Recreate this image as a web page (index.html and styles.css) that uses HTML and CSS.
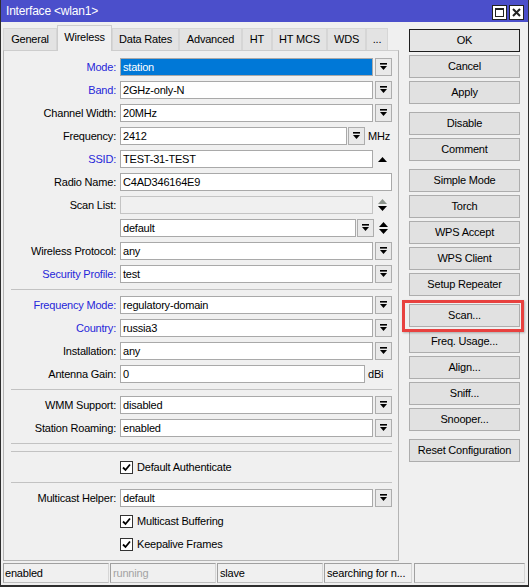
FILE: index.html
```html
<!DOCTYPE html>
<html>
<head>
<meta charset="utf-8">
<title>Interface &lt;wlan1&gt;</title>
<link rel="stylesheet" href="styles.css">
</head>
<body>
<div class="window">
  <div class="titlebar">
    <span class="title">Interface &lt;wlan1&gt;</span>
    <div class="tb-btns">
      <span class="tb-btn"><svg width="9" height="9" viewBox="0 0 9 9"><rect x="0.5" y="0.5" width="8" height="8" fill="none" stroke="#222" stroke-width="1"/><rect x="0" y="0" width="9" height="2" fill="#222"/></svg></span>
      <span class="tb-btn"><svg width="9" height="9" viewBox="0 0 9 9"><path d="M1 1L8 8M8 1L1 8" stroke="#222" stroke-width="2"/></svg></span>
    </div>
  </div>

  <div class="main">
    <div class="left">
      <div class="tabs">
        <div class="tab t1">General</div>
        <div class="tab t2 active">Wireless</div>
        <div class="tab t3">Data Rates</div>
        <div class="tab t4">Advanced</div>
        <div class="tab t5">HT</div>
        <div class="tab t6">HT MCS</div>
        <div class="tab t7">WDS</div>
        <div class="tab t8">...</div>
      </div>
      <div class="panel">
        <div class="row"><span class="lbl blue">Mode:</span><div class="field w-sel selected">station</div><span class="dd"><svg width="9" height="8" viewBox="0 0 9 8"><rect x="1" y="0" width="7" height="1.6"/><path d="M1 3h7l-3.5 4z"/></svg></span></div>
        <div class="row"><span class="lbl blue">Band:</span><div class="field w-sel">2GHz-only-N</div><span class="dd"><svg width="9" height="8" viewBox="0 0 9 8"><rect x="1" y="0" width="7" height="1.6"/><path d="M1 3h7l-3.5 4z"/></svg></span></div>
        <div class="row"><span class="lbl">Channel Width:</span><div class="field w-sel">20MHz</div><span class="dd"><svg width="9" height="8" viewBox="0 0 9 8"><rect x="1" y="0" width="7" height="1.6"/><path d="M1 3h7l-3.5 4z"/></svg></span></div>
        <div class="row"><span class="lbl">Frequency:</span><div class="field w-freq">2412</div><span class="dd tight"><svg width="9" height="8" viewBox="0 0 9 8"><rect x="1" y="0" width="7" height="1.6"/><path d="M1 3h7l-3.5 4z"/></svg></span><span class="unit">MHz</span></div>
        <div class="row"><span class="lbl blue">SSID:</span><div class="field w-sel">TEST-31-TEST</div><span class="arrows"><svg width="9" height="5" viewBox="0 0 9 5"><path d="M0 5h9L4.5 0z"/></svg></span></div>
        <div class="row"><span class="lbl">Radio Name:</span><div class="field w-full">C4AD346164E9</div></div>
        <div class="row"><span class="lbl">Scan List:</span><div class="field w-sel disabled"></div><span class="arrows"><svg width="9" height="12" viewBox="0 0 9 12"><path d="M0 5h9L4.5 0z" fill="#8c948c"/><path d="M0 7h9L4.5 12z"/></svg></span></div>
        <div class="row"><span class="lbl"></span><div class="field w-def">default</div><span class="dd tight"><svg width="9" height="8" viewBox="0 0 9 8"><rect x="1" y="0" width="7" height="1.6"/><path d="M1 3h7l-3.5 4z"/></svg></span><span class="arrows narrow"><svg width="9" height="12" viewBox="0 0 9 12"><path d="M0 5h9L4.5 0z"/><path d="M0 7h9L4.5 12z"/></svg></span></div>
        <div class="row"><span class="lbl">Wireless Protocol:</span><div class="field w-sel">any</div><span class="dd"><svg width="9" height="8" viewBox="0 0 9 8"><rect x="1" y="0" width="7" height="1.6"/><path d="M1 3h7l-3.5 4z"/></svg></span></div>
        <div class="row"><span class="lbl blue">Security Profile:</span><div class="field w-sel">test</div><span class="dd"><svg width="9" height="8" viewBox="0 0 9 8"><rect x="1" y="0" width="7" height="1.6"/><path d="M1 3h7l-3.5 4z"/></svg></span></div>

        <div class="sep"></div>

        <div class="row"><span class="lbl blue">Frequency Mode:</span><div class="field w-sel">regulatory-domain</div><span class="dd"><svg width="9" height="8" viewBox="0 0 9 8"><rect x="1" y="0" width="7" height="1.6"/><path d="M1 3h7l-3.5 4z"/></svg></span></div>
        <div class="row"><span class="lbl blue">Country:</span><div class="field w-sel">russia3</div><span class="dd"><svg width="9" height="8" viewBox="0 0 9 8"><rect x="1" y="0" width="7" height="1.6"/><path d="M1 3h7l-3.5 4z"/></svg></span></div>
        <div class="row"><span class="lbl">Installation:</span><div class="field w-sel">any</div><span class="dd"><svg width="9" height="8" viewBox="0 0 9 8"><rect x="1" y="0" width="7" height="1.6"/><path d="M1 3h7l-3.5 4z"/></svg></span></div>
        <div class="row"><span class="lbl">Antenna Gain:</span><div class="field w-gain">0</div><span class="unit">dBi</span></div>

        <div class="sep"></div>

        <div class="row"><span class="lbl">WMM Support:</span><div class="field w-sel">disabled</div><span class="dd"><svg width="9" height="8" viewBox="0 0 9 8"><rect x="1" y="0" width="7" height="1.6"/><path d="M1 3h7l-3.5 4z"/></svg></span></div>
        <div class="row"><span class="lbl">Station Roaming:</span><div class="field w-sel">enabled</div><span class="dd"><svg width="9" height="8" viewBox="0 0 9 8"><rect x="1" y="0" width="7" height="1.6"/><path d="M1 3h7l-3.5 4z"/></svg></span></div>

        <div class="sep"></div>
        <div class="sep"></div>

        <div class="row"><span class="lbl"></span><span class="cb"><svg width="9" height="9" viewBox="0 0 9 9"><path d="M1 4.5L3.5 7L8 1.5" fill="none" stroke="#000" stroke-width="1.8"/></svg></span><span>Default Authenticate</span></div>

        <div class="sep"></div>

        <div class="row"><span class="lbl">Multicast Helper:</span><div class="field w-sel">default</div><span class="dd"><svg width="9" height="8" viewBox="0 0 9 8"><rect x="1" y="0" width="7" height="1.6"/><path d="M1 3h7l-3.5 4z"/></svg></span></div>
        <div class="row"><span class="lbl"></span><span class="cb"><svg width="9" height="9" viewBox="0 0 9 9"><path d="M1 4.5L3.5 7L8 1.5" fill="none" stroke="#000" stroke-width="1.8"/></svg></span><span>Multicast Buffering</span></div>
        <div class="row"><span class="lbl"></span><span class="cb"><svg width="9" height="9" viewBox="0 0 9 9"><path d="M1 4.5L3.5 7L8 1.5" fill="none" stroke="#000" stroke-width="1.8"/></svg></span><span>Keepalive Frames</span></div>
      </div>
    </div>

    <div class="side">
      <div class="btn default">OK</div>
      <div class="btn">Cancel</div>
      <div class="btn">Apply</div>
      <div class="btn gs">Disable</div>
      <div class="btn">Comment</div>
      <div class="btn gs">Simple Mode</div>
      <div class="btn">Torch</div>
      <div class="btn">WPS Accept</div>
      <div class="btn">WPS Client</div>
      <div class="btn">Setup Repeater</div>
      <div class="btn gs scan">Scan...<span class="highlight"></span></div>
      <div class="btn">Freq. Usage...</div>
      <div class="btn">Align...</div>
      <div class="btn">Sniff...</div>
      <div class="btn">Snooper...</div>
      <div class="btn gs">Reset Configuration</div>
    </div>
  </div>

  <div class="status">
    <div class="cell c1">enabled</div>
    <div class="cell c2 dim">running</div>
    <div class="cell c3">slave</div>
    <div class="cell c4">searching for n...</div>
    <div class="cell c5"></div>
  </div>
</div>
</body>
</html>
```

FILE: styles.css
```css
* { box-sizing: border-box; }
html, body { margin: 0; padding: 0; }
body {
  width: 529px;
  height: 587px;
  overflow: hidden;
  background: #f0f0f0;
  font-family: "Liberation Sans", Arial, sans-serif;
  font-size: 11px;
  letter-spacing: -0.2px;
  color: #000;
}

.window {
  width: 529px;
  height: 587px;
  display: flex;
  flex-direction: column;
  background: #f0f0f0;
  border: 1px solid #2e2e2e;
  border-top: 0;
  border-bottom-width: 2px;
}

/* title bar */
.titlebar {
  flex: none;
  height: 22px;
  background: #4b4fcb;
  color: #fff;
  display: flex;
  align-items: flex-start;
  justify-content: space-between;
  padding: 0 4px 0 5px;
}
.title {
  font-size: 12px;
  line-height: 14px;
  padding-top: 4px;
}
.tb-btns { display: flex; gap: 2px; margin-top: 5px; }
.tb-btn {
  width: 15px;
  height: 15px;
  background: #fff;
  border: 1px solid #222;
  display: flex;
  align-items: center;
  justify-content: center;
}

/* main */
.main { flex: 1; display: flex; min-height: 0; }
.left {
  width: 396px;
  margin-left: 2px;
  padding-top: 3px;
  display: flex;
  flex-direction: column;
}

.tabs { height: 25px; display: flex; align-items: flex-end; flex: none; }
.tab {
  height: 22px;
  padding-top: 3px;
  line-height: 15px;
  text-align: center;
  white-space: nowrap;
  background: #e3e3e3;
  border: 1px solid #d6d6d6;
  border-bottom: 0;
}
.tab.active {
  height: 26px;
  margin-bottom: -1px;
  padding-top: 4px;
  background: #f0f0f0;
  border-color: #cdcdcd;
  position: relative;
  z-index: 1;
}
.t1 { width: 54px; }
.t2 { width: 55px; }
.t3 { width: 67px; }
.t4 { width: 63px; }
.t5 { width: 30px; }
.t6 { width: 55px; }
.t7 { width: 39px; }
.t8 { width: 22px; }

.panel {
  height: 511px;
  flex: none;
  border: 1px solid #b4b4b4;
  border-top-color: #cdcdcd;
  padding-top: 7px;
  display: flex;
  flex-direction: column;
}

.row { display: flex; align-items: center; height: 18px; flex: none; }
.row + .row { margin-top: 5px; }
.lbl {
  width: 112px;
  margin-right: 4px;
  text-align: right;
  white-space: nowrap;
  flex: none;
}
.blue { color: #2626d9; }

.field {
  height: 18px;
  border: 1px solid #a9a9a9;
  background: #fff;
  padding: 0 2px;
  line-height: 16px;
  white-space: nowrap;
  overflow: hidden;
  flex: none;
}
.field.selected { background: #0078d7; color: #fff; }
.field.disabled { background: #f0f0f0; border-color: #c4c4c4; }
.w-sel { width: 253px; }
.w-full { width: 272px; }
.w-freq { width: 227px; }
.w-gain { width: 245px; }
.w-def { width: 236px; }

.dd {
  flex: none;
  width: 17px;
  height: 18px;
  margin-left: 2px;
  border: 1px solid #adadad;
  background: #e9e9e9;
  display: flex;
  align-items: center;
  justify-content: center;
}
.dd.tight { margin-left: 1px; }
.unit { margin-left: 3px; }
.arrows {
  flex: none;
  width: 19px;
  height: 18px;
  display: flex;
  align-items: center;
  justify-content: center;
}
.arrows.narrow { width: 18px; }

.sep {
  flex: none;
  width: 381px;
  height: 1px;
  margin: 6px 0 6px 7px;
  background: #c2c2c2;
}
.sep + .sep { margin-top: 1px; }

.cb {
  flex: none;
  width: 13px;
  height: 13px;
  margin-right: 4px;
  border: 1px solid #333;
  background: #fff;
  display: flex;
  align-items: center;
  justify-content: center;
}

/* side buttons */
.side {
  width: 111px;
  margin-left: 10px;
  padding-top: 7px;
  display: flex;
  flex-direction: column;
}
.btn {
  flex: none;
  height: 23px;
  border: 1px solid #adadad;
  background: #e1e1e1;
  text-align: center;
  line-height: 21px;
  white-space: nowrap;
}
.btn + .btn { margin-top: 3px; }
.btn.gs { margin-top: 8px; }
.btn.default { border-color: #1e1e1e; background: #e5e5e5; }
.scan { position: relative; }
.highlight {
  position: absolute;
  left: -8px;
  top: -5px;
  width: 122px;
  height: 32px;
  border: 3px solid #e8413f;
  box-shadow: 1px 1px 2px rgba(0, 0, 0, 0.25);
}

/* status bar */
.status {
  flex: none;
  height: 20px;
  margin: 0 0 2px 2px;
  display: flex;
  gap: 1px;
}
.cell {
  height: 20px;
  border: 1px solid;
  border-color: #a0a0a0 #d6d6d6 #bdbdbd #a0a0a0;
  padding-left: 2px;
  line-height: 18px;
  white-space: nowrap;
  overflow: hidden;
}
.c1 { width: 106px; padding-left: 1px; }
.c2 { width: 106px; }
.c3 { width: 106px; }
.c4 { width: 88px; }
.c5 { width: 111px; margin-left: 1px; }
.dim { color: #a3a3a3; }
```
